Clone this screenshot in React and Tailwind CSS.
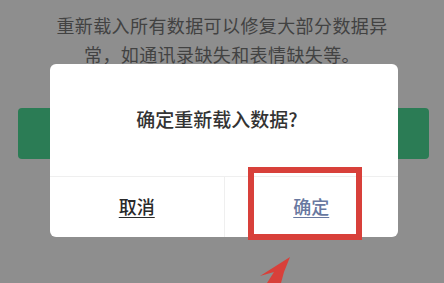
export default function App() {
  const font = { fontFamily: '"Noto Sans CJK SC", "Noto Sans", sans-serif' };
  return (
    <div className="relative w-[444px] h-[283px] overflow-hidden bg-[#8e8e8e]" style={font}>
      <div className="pt-[11px] text-center text-[18px] leading-[29px] text-[#424242] tracking-[0.4px]">
        <p>重新载入所有数据可以修复大部分数据异</p>
        <p>常，如通讯录缺失和表情缺失等。</p>
      </div>
      <div className="mt-[39px] ml-[18px] mr-[15px] h-[51px] rounded-[4px] bg-[#2b7c55]" />

      <div className="absolute left-[50px] top-[64px] w-[348px] h-[173px] rounded-[6px] bg-white flex flex-col">
        <div className="h-[112px] flex items-center justify-center text-[19px] font-medium text-[#333] pr-[14px] pb-[1px]">
          确定重新载入数据?
        </div>
        <div className="flex flex-1 border-t border-[#efefef]">
          <div className="flex-1 flex items-center justify-center text-[18px] font-medium text-[#2a2a2a] underline underline-offset-[3px] pb-[1px]">
            取消
          </div>
          <div className="w-px bg-[#efefef]" />
          <div className="flex-1 flex items-center justify-center text-[18px] font-medium text-[#6878a0] underline underline-offset-[3px] pb-[1px]">
            确定
          </div>
        </div>
      </div>

      <div className="absolute left-[248px] top-[167px] w-[114px] h-[73px] border-[6px] border-[#d8403a]" />

      <svg className="absolute left-0 top-0" width="444" height="283" viewBox="0 0 444 283">
        <polygon points="290,257 260,276 274,272 267,283 281,283 284,272" fill="#d8403a" />
      </svg>
    </div>
  );
}
